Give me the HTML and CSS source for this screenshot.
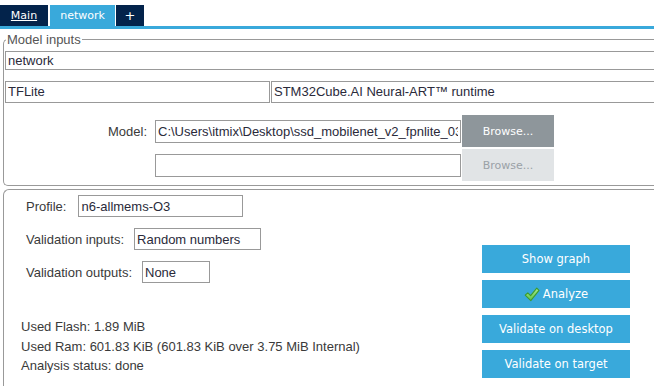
FILE: index.html
```html
<!DOCTYPE html>
<html lang="en">
<head>
    <meta charset="UTF-8">
    <title>Model setup</title>
    <link rel="stylesheet" href="styles.css">
</head>
<body>

    <div class="tabs">
        <div class="tab tab-main">Main</div>
        <div class="tab tab-active">network</div>
        <div class="tab tab-add">+</div>
    </div>
    <div class="tab-bar"></div>

    <fieldset class="model-inputs">
        <legend>Model inputs</legend>
        <input class="name-input" type="text" value="network" readonly>
        <div class="info-row">
            <div class="info-cell info-left">TFLite</div>
            <div class="info-cell info-right">STM32Cube.AI Neural-ART™ runtime</div>
        </div>
        <div class="file-row">
            <label class="file-label">Model:</label>
            <input class="file-input" type="text" value="C:\Users\itmix\Desktop\ssd_mobilenet_v2_fpnlite_035_416_int8.tflite" readonly>
            <button class="browse">Browse...</button>
        </div>
        <div class="file-row">
            <span class="file-label"></span>
            <input class="file-input" type="text" value="" readonly>
            <button class="browse browse-off">Browse...</button>
        </div>
    </fieldset>

    <div class="panel">
        <div class="panel-left">
            <div class="form-row">
                <span>Profile:</span>
                <input class="profile-input" type="text" value="n6-allmems-O3" readonly>
            </div>
            <div class="form-row">
                <span>Validation inputs:</span>
                <input class="vin-input" type="text" value="Random numbers" readonly>
            </div>
            <div class="form-row">
                <span>Validation outputs:</span>
                <input class="vout-input" type="text" value="None" readonly>
            </div>

            <div class="stats">
                <div>Used Flash: 1.89 MiB</div>
                <div>Used Ram: 601.83 KiB (601.83 KiB over 3.75 MiB Internal)</div>
                <div>Analysis status: done</div>
            </div>
        </div>

        <div class="actions">
            <button class="action">Show graph</button>
            <button class="action">
                <svg class="check" width="16" height="15" viewBox="0 0 16 15">
                    <defs>
                        <linearGradient id="chk" x1="0" y1="0" x2="0" y2="1">
                            <stop offset="0" stop-color="#a8ec8c"/>
                            <stop offset="1" stop-color="#5cc34a"/>
                        </linearGradient>
                    </defs>
                    <path d="M1.2 8.2 L3.8 5.8 L6.6 8.6 L12.8 1.2 L15 3.4 L6.8 13.6 Z" fill="url(#chk)" stroke="#3c9a2e" stroke-width="1.1" stroke-linejoin="round"/>
                </svg>
                Analyze
            </button>
            <button class="action">Validate on desktop</button>
            <button class="action">Validate on target</button>
        </div>
    </div>

</body>
</html>
```

FILE: styles.css
```css
    body {
        margin: 0;
        font-family: 'Liberation Sans', Arial, sans-serif;
        font-size: 13px;
        color: #3a3a3a;
        background: white;
        width: 654px;
        height: 386px;
        overflow: hidden;
    }

    /* tab strip along the top */
    .tabs {
        display: flex;
        padding-top: 5px;
    }

    .tab {
        height: 21px;
        line-height: 21px;
        font-family: 'DejaVu Sans', sans-serif;
        font-size: 11px;
        color: white;
        text-align: center;
        background-color: #03234b;
    }

    .tab-main {
        width: 48px;
        margin-right: 2px;
        text-decoration: underline;
    }

    .tab-active {
        width: 65px;
        margin-right: 1px;
        background-color: #39a9db;
    }

    .tab-add {
        width: 28px;
        font-size: 13px;
    }

    .tab-bar {
        height: 3px;
        background-color: #39a9db;
    }

    /* model inputs box */
    .model-inputs {
        margin: 3px 0 0 3px;
        padding: 4px 0 2px 1px;
        border: 1px solid #999;
        border-right: none;
        border-radius: 5px 0 0 5px;
        min-width: 0;
    }

    .model-inputs legend {
        padding: 0 1px;
        margin-left: 1px;
        line-height: 15px;
        color: #555;
    }

    input {
        font-family: 'Liberation Sans', Arial, sans-serif;
        font-size: 13px;
        color: #2a2a3a;
        border: 1px solid #999;
        border-radius: 0;
        padding: 0 2px;
        margin: 0;
        box-sizing: border-box;
        background: white;
        outline: none;
    }

    .name-input {
        display: block;
        width: 100%;
        height: 19px;
        border-right: none;
        margin-bottom: 11px;
    }

    .info-row {
        display: flex;
        height: 22px;
        margin-bottom: 12px;
    }

    .info-cell {
        border: 1px solid #999;
        line-height: 20px;
        padding: 0 2px;
        color: #2a2a3a;
        white-space: nowrap;
        overflow: hidden;
    }

    .info-left {
        width: 265px;
        box-sizing: border-box;
        margin-right: 1px;
    }

    .info-right {
        flex: 1;
        border-right: none;
    }

    .file-row {
        display: flex;
        align-items: center;
        height: 32px;
        margin-bottom: 2px;
    }

    .file-label {
        width: 142px;
        text-align: right;
        margin-right: 8px;
    }

    .file-input {
        width: 306px;
        height: 23px;
    }

    .browse {
        width: 92px;
        height: 32px;
        margin-left: 1px;
        border: none;
        background-color: #8e969b;
        color: white;
        font-family: 'DejaVu Sans', sans-serif;
        font-size: 11px;
    }

    .browse-off {
        background-color: #e1e4e6;
        color: #9aa1a6;
    }

    /* lower panel */
    .panel {
        display: flex;
        margin: 3px 0 0 3px;
        padding-top: 5px;
        height: 200px;
        border-top: 1px solid #999;
        border-left: 1px solid #999;
        border-top-left-radius: 6px;
    }

    .panel-left {
        flex: 1;
    }

    .form-row {
        display: flex;
        align-items: center;
        height: 22px;
        margin: 0 0 11px 22px;
    }

    .form-row span {
        margin-right: 10px;
    }

    .form-row input {
        height: 22px;
    }

    .form-row:first-child span {
        margin-right: 12px;
    }

    .profile-input {
        width: 165px;
    }

    .vin-input {
        width: 127px;
    }

    .vout-input {
        width: 68px;
    }

    .stats {
        margin: 34px 0 0 17px;
        line-height: 19.5px;
    }

    .actions {
        display: flex;
        flex-direction: column;
        gap: 7px;
        margin: 50px 24px 0 0;
    }

    .action {
        width: 148px;
        height: 28px;
        border: none;
        background-color: #39a9db;
        color: white;
        font-family: 'DejaVu Sans', sans-serif;
        font-size: 11.5px;
        display: flex;
        align-items: center;
        justify-content: center;
        gap: 3px;
        padding: 0;
    }

    .check {
        margin-top: 1px;
    }
```
